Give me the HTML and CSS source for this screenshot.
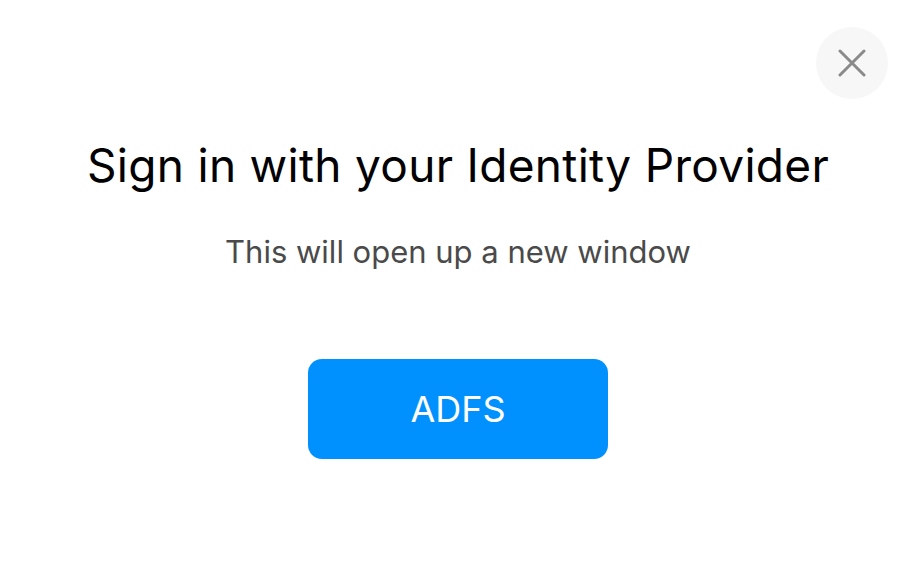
FILE: index.html
```html
<!DOCTYPE html>
<html lang="en">
<head>
<meta charset="utf-8">
<title>Sign in</title>
<link rel="stylesheet" href="styles.css">
</head>
<body>
<div class="modal">
  <div class="topbar">
    <button class="close" aria-label="Close">
      <svg width="28" height="28" viewBox="0 0 28 28"><path d="M2 2L26 26M26 2L2 26" stroke="#8a8a8a" stroke-width="3" stroke-linecap="round"/></svg>
    </button>
  </div>
  <h1 class="title">Sign in with your Identity Provider</h1>
  <p class="subtitle">This will open up a new window</p>
  <button class="idp">ADFS</button>
</div>
</body>
</html>
```
FILE: styles.css
```css
html, body {
  margin: 0;
  padding: 0;
  background: #ffffff;
}
.modal {
  box-sizing: border-box;
  width: 914px;
  height: 586px;
  padding-left: 2px;
  display: flex;
  flex-direction: column;
  align-items: center;
  font-family: Inter, "Liberation Sans", sans-serif;
}
.topbar {
  align-self: stretch;
  display: flex;
  justify-content: flex-end;
  padding: 27px 26px 0 0;
}
.close {
  width: 72px;
  height: 72px;
  border-radius: 50%;
  border: none;
  background: #f7f7f7;
  display: flex;
  align-items: center;
  justify-content: center;
  padding: 0;
}
.title {
  margin: 39px 0 0;
  font-size: 46px;
  font-weight: 400;
  line-height: 54px;
  letter-spacing: 0.3px;
  color: #000;
}
.subtitle {
  margin: 40px 0 0;
  font-size: 31px;
  line-height: 40px;
  color: #4a4a4a;
}
.idp {
  margin-top: 87px;
  width: 300px;
  height: 100px;
  border: none;
  border-radius: 14px;
  background: #0091ff;
  color: #fff;
  font-family: Inter, "Liberation Sans", sans-serif;
  font-size: 36px;
}
```
